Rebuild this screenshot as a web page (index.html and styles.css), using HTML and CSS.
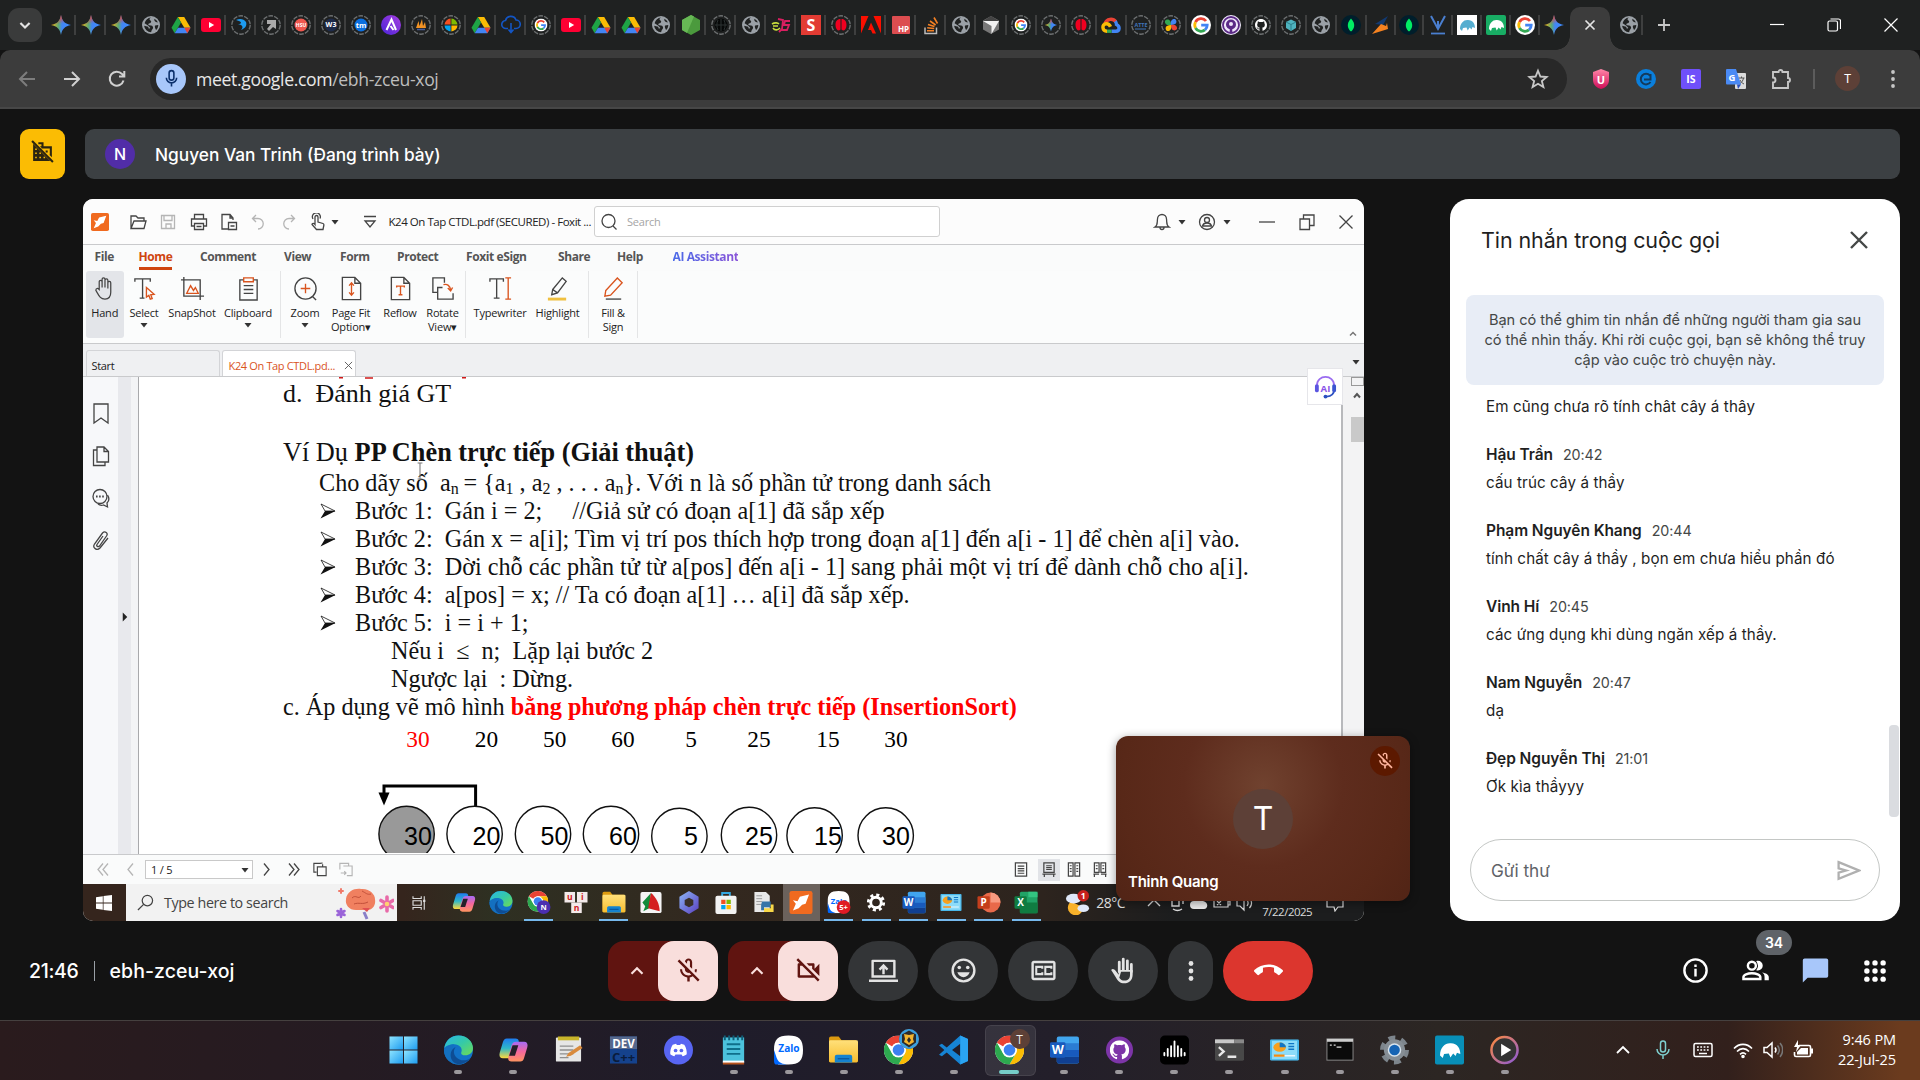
FILE: index.html
```html
<!DOCTYPE html>
<html lang="vi">
<head>
<meta charset="utf-8">
<title>Meet - ebh-zceu-xoj</title>
<link rel="stylesheet" href="styles.css">
</head>
<body>
<svg class="defs" aria-hidden="true">
<defs>
<linearGradient id="g-gem" x1="0" y1=".5" x2="1" y2=".5"><stop offset="0" stop-color="#fbbc04"/><stop offset=".38" stop-color="#5aa879"/><stop offset=".55" stop-color="#4285f4"/><stop offset="1" stop-color="#3c8cff"/></linearGradient>
<linearGradient id="g-gemr" x1=".4" y1="0" x2=".6" y2="1"><stop offset=".05" stop-color="#ea4335"/><stop offset=".45" stop-color="#ea4335" stop-opacity="0"/></linearGradient>
<linearGradient id="g-edge" x1="0" y1="0" x2="1" y2="1"><stop offset="0" stop-color="#2ab7e8"/><stop offset=".5" stop-color="#35c9a8"/><stop offset="1" stop-color="#6fdc52"/></linearGradient>
<linearGradient id="g-cop1" x1="0" y1="0" x2="0" y2="1"><stop offset="0" stop-color="#1e7bf0"/><stop offset=".5" stop-color="#2fb8c8"/><stop offset="1" stop-color="#ffd83b"/></linearGradient>
<linearGradient id="g-cop2" x1="0" y1="0" x2="0" y2="1"><stop offset="0" stop-color="#a56bf5"/><stop offset=".5" stop-color="#f4679c"/><stop offset="1" stop-color="#ff9460"/></linearGradient>
<linearGradient id="g-win" x1="0" y1="0" x2="1" y2="1"><stop offset="0" stop-color="#8ee4ff"/><stop offset="1" stop-color="#1e9cf0"/></linearGradient>
<linearGradient id="g-fold" x1="0" y1="0" x2="0" y2="1"><stop offset="0" stop-color="#ffe07a"/><stop offset="1" stop-color="#f7bd2e"/></linearGradient>
<linearGradient id="g-u" x1="0" y1="0" x2="0" y2="1"><stop offset="0" stop-color="#ff86a8"/><stop offset="1" stop-color="#cf0d58"/></linearGradient>
<linearGradient id="g-ast" x1="0" y1="1" x2="1" y2="0"><stop offset="0" stop-color="#4a24d8"/><stop offset="1" stop-color="#a63de0"/></linearGradient>
<linearGradient id="g-media" x1="0" y1="0" x2="1" y2="1"><stop offset="0" stop-color="#ff8a3c"/><stop offset="1" stop-color="#8b5ad8"/></linearGradient>
<linearGradient id="g-365" x1="0" y1="0" x2="1" y2="1"><stop offset="0" stop-color="#8cb6f5"/><stop offset="1" stop-color="#5a3fc0"/></linearGradient>

<symbol id="f-gem" viewBox="0 0 20 20"><path d="M10 0C11 6 14 9 20 10 14 11 11 14 10 20 9 14 6 11 0 10 6 9 9 6 10 0z" fill="url(#g-gem)"/><path d="M10 0C11 6 14 9 20 10 14 11 11 14 10 20 9 14 6 11 0 10 6 9 9 6 10 0z" fill="url(#g-gemr)"/></symbol>
<symbol id="f-globe" viewBox="0 0 20 20"><circle cx="10" cy="10" r="9" fill="#9aa0a6"/><path d="M10 2.600c-2 1-1.800 2.200-.6 2.800 1.600.7.500 2.600-.9 2.800-1.800.3-1.400 1.800 0 2 2 .2 3.800.6 3.600 2.600-.2 1.500-1.500 1.800-2 4.500a7.300 7.300 0 0 1-7-6.500l4 1 .8 2 1.500-.8-2-2.300-3.800-2.400C4.500 5.300 6.800 2.800 10 2.600z" fill="#202222"/><path d="M13.500 3.800c-.6 1.500.2 2.700 1.600 3.200.8.300 1.700.2 2 .8A7.500 7.500 0 0 0 13.500 3.800zM14 10.500l3.300-.6c0 2.200-1 4-2.300 5.200-.3-1.600-1.700-2.600-1-4.600z" fill="#202222"/></symbol>
<symbol id="f-drive" viewBox="0 0 20 20"><path d="M6.800 2h6.400L19.500 12.800h-6.200z" fill="#fbbc04"/><path d="M6.800 2L.5 12.800l3.200 5.400L10 7.400z" fill="#1ea446"/><path d="M7 12.800h12.500l-3.200 5.400H3.700z" fill="#4285f4"/><path d="M13.300 12.800h6.200l-3.200 5.400z" fill="#ea4335"/></symbol>
<symbol id="f-yt" viewBox="0 0 20 20"><rect x="0" y="3" width="20" height="14" rx="3" fill="#ff0033"/><path d="M8 7l5.200 3L8 13z" fill="#fff"/></symbol>
<symbol id="f-ring" viewBox="0 0 20 20"><circle cx="10" cy="10" r="9.200" fill="none" stroke="#6c6f70" stroke-width="1.400" stroke-dasharray="4.600 1.180"/></symbol>
<symbol id="f-g" viewBox="0 0 20 20"><circle cx="10" cy="10" r="10" fill="#fff"/><path d="M15 6A6.200 6.200 0 0 0 4.500 7.200" fill="none" stroke="#ea4335" stroke-width="2.800"/><path d="M4.500 7.200a6.200 6.200 0 0 0 0 5.800" fill="none" stroke="#fbbc04" stroke-width="2.800"/><path d="M4.500 13a6.200 6.200 0 0 0 9.500 1.900" fill="none" stroke="#34a853" stroke-width="2.800"/><path d="M10.200 10.200h6a6.200 6.200 0 0 1-2.200 4.700" fill="none" stroke="#4285f4" stroke-width="2.800"/></symbol>
<symbol id="f-cloud" viewBox="0 0 20 20"><g fill="none" stroke-width="3.400"><path d="M4 8.500A6.200 6.200 0 0 1 14.800 6.800" stroke="#ea4335"/><path d="M14.300 6.200c1 1.300 1.200 2 1.200 3.300 3.500 1.500 3.500 6.700-.5 6.700h-4.500" stroke="#4285f4"/><path d="M10.500 16.200H6" stroke="#34a853"/><path d="M6 16.200c-5 0-5.500-7-1-7.500 2-.2 3.500.8 4.500 3" stroke="#fbbc04"/></g></symbol>
<symbol id="f-mongo" viewBox="0 0 20 20"><circle cx="10" cy="10" r="10" fill="#001e2b"/><path d="M10 3.500c5 5 3.500 10.500 0 13-3.500-2.500-5-8 0-13z" fill="#00ed64"/></symbol>
<symbol id="f-mam" viewBox="0 0 20 20"><path d="M3 14C3 8 7 4.500 11 5c5 .2 7 4 7 8l-2.500-1-1 2.500-1.800-2-2 3-1.200-3-3.500.5-1 3z"/></symbol>
<symbol id="f-red" viewBox="0 0 20 20"><use href="#f-ring"/><path d="M9.500 4C6 4 4.500 6.500 4.500 10s1.500 5.500 3.500 5.500l1.500-1zM10.500 4c3.500 0 5 2.500 5 6s-1.500 5.500-3.500 5.500l-1.500-1z" fill="#f00020"/></symbol>

<symbol id="i-chrome" viewBox="0 0 30 30"><circle cx="15" cy="15" r="15" fill="#fff"/><path d="M2 7.500A15 15 0 0 1 28 7.500H15a7.500 7.500 0 0 0-6.500 3.800z" fill="#ea4335"/><path d="M28 7.500A15 15 0 0 1 15 30l6.500-11.200A7.500 7.500 0 0 0 21.500 11.300L18 7.500z" fill="#fbbc04"/><path d="M2 7.500A15 15 0 0 0 15 30l6.500-11.200a7.500 7.500 0 0 1-13 0z" fill="#2da94f"/><circle cx="15" cy="15" r="7.500" fill="#fff"/><circle cx="15" cy="15" r="6" fill="#3c80f0"/></symbol>
<symbol id="i-edge" viewBox="0 0 30 30"><circle cx="15" cy="15" r="15" fill="#1272c8"/><path d="M.3 13C2 4 8 0 15 0c9 0 15 6.500 15 13 0 5-4 7.500-8 7.500-3 0-5-1.500-4-3.500 1.500-4-2-8-7.500-8C5.500 9 1.500 11 .3 13z" fill="url(#g-edge)"/><path d="M10.500 9C6 15 9 27 22 25.500c2-.2 4-1.200 5-2C24 28 20 30 15 30 6.500 30 0 23.500 0 15c0-2 6-6 10.500-6z" fill="#1470c0"/><path d="M12 12c-4 5-1 12 6 13.500 4 .7 7.500-.5 9-2-3 4-8 6.500-13 6C6 28 4 16 12 12z" fill="#0e4d94"/></symbol>
<symbol id="i-cop" viewBox="0 0 30 30"><path d="M8 3h9c3 0 4 2 3.200 5l-3 11c-.8 3-2 4.500-5 4.500H4c-3.500 0-4-3-3.200-6L4 7c.7-2.600 2-4 4-4z" fill="url(#g-cop1)"/><path d="M22 27h-9c-3 0-4-2-3.200-5l3-11c.8-3 2-4.500 5-4.500H26c3.500 0 4 3 3.200 6L26 23c-.7 2.600-2 4-4 4z" fill="url(#g-cop2)"/><path d="M14 10h6l-3.500 11h-6z" fill="#241f2a"/></symbol>
<symbol id="i-word" viewBox="0 0 30 30"><rect x="7" y="1" width="23" height="28" rx="2" fill="#41a5ee"/><path d="M7 8h23v7H7z" fill="#2b7cd3"/><path d="M7 15h23v7H7z" fill="#185abd"/><path d="M7 22h23v5a2 2 0 0 1-2 2H9a2 2 0 0 1-2-2z" fill="#103f91"/><rect x="0" y="7" width="16" height="16" rx="1.500" fill="#185abd"/><text x="8" y="19.500" text-anchor="middle" class="svgt" font-size="13" fill="#fff">W</text></symbol>
<symbol id="i-fold" viewBox="0 0 30 30"><path d="M0 3a2 2 0 0 1 2-2h8l3 4h15v22H0z" fill="#dc9a10"/><rect x="0" y="5" width="30" height="23" rx="1.500" fill="url(#g-fold)"/><path d="M6 28v-6a2 2 0 0 1 2-2h14a2 2 0 0 1 2 2v6z" fill="#1583cf"/><path d="M9 24h12" stroke="#0b5aa0" stroke-width="1.500"/></symbol>
<symbol id="i-zalo" viewBox="0 0 30 30"><path d="M5 28C1 26 0 22 0 15 0 4 4 0 15 0s15 4 15 15-4 15-15 15H4z" fill="#fff"/><path d="M2 21c2 7 5 8 11 9H3c-2 0-3-1-3-4V15z" fill="#0068ff"/><text x="15.500" y="17.500" text-anchor="middle" class="svgt" font-size="10.500" fill="#0068ff">Zalo</text></symbol>
<symbol id="i-cpl" viewBox="0 0 30 30" preserveAspectRatio="none"><rect width="30" height="30" rx="1.500" fill="#48b7ea"/><rect x="2" y="2" width="26" height="26" fill="#8ddcf9"/><circle cx="10" cy="11" r="6.500" fill="#f8a01c"/><path d="M10 4.500a6.500 6.500 0 0 1 6.500 6.500H10z" fill="#0f76c6"/><path d="M19 6h6M19 10h6M19 14h6" stroke="#0f76c6" stroke-width="2"/><path d="M4 23h22" stroke="#e8f8ff" stroke-width="2"/><path d="M4 23h11" stroke="#f28c13" stroke-width="3"/></symbol>
<symbol id="i-gh" viewBox="0 0 16 16"><path d="M8 0C3.580 0 0 3.580 0 8c0 3.540 2.290 6.530 5.470 7.590.4.070.55-.17.550-.38 0-.19-.01-.82-.01-1.490-2.010.37-2.530-.49-2.690-.94-.09-.23-.48-.94-.82-1.130-.28-.15-.68-.52-.01-.53.63-.01 1.080.58 1.230.82.720 1.210 1.870.87 2.330.66.070-.52.280-.87.510-1.070-1.780-.2-3.640-.89-3.640-3.950 0-.87.310-1.590.82-2.150-.08-.2-.36-1.020.08-2.120 0 0 .67-.21 2.200.82.640-.18 1.320-.27 2-.27s1.360.09 2 .27c1.530-1.040 2.200-.82 2.200-.82.440 1.100.160 1.920.080 2.120.510.560.820 1.270.820 2.150 0 3.070-1.870 3.750-3.650 3.950.290.250.540.730.540 1.480 0 1.070-.01 1.930-.01 2.200 0 .21.150.46.550.38A8.010 8.010 0 0 0 16 8c0-4.420-3.580-8-8-8z"/></symbol>
<symbol id="i-micoff" viewBox="0 0 24 24"><path d="M10.800 4.900c0-.66.540-1.200 1.200-1.200s1.200.54 1.200 1.200l-.01 3.910L15 10.600V5c0-1.660-1.340-3-3-3-1.540 0-2.790 1.160-2.960 2.650l1.760 1.760V4.900zM19 11h-1.700c0 .58-.1 1.130-.27 1.640l1.270 1.270c.44-.88.700-1.870.700-2.910zM4.410 2.860L3 4.270l6 6V11c0 1.660 1.340 3 3 3 .23 0 .44-.03.650-.08l1.660 1.660c-.71.330-1.500.520-2.310.520-2.760 0-5.300-2.100-5.300-5.100H5c0 3.410 2.720 6.230 6 6.720V21h2v-3.280c.91-.13 1.770-.45 2.550-.9l4.200 4.200 1.410-1.410z"/></symbol>
<symbol id="i-mic" viewBox="0 0 24 24" fill="none" stroke="currentColor" stroke-width="2"><rect x="9" y="2" width="6" height="12" rx="3"/><path d="M5.500 11a6.500 6.500 0 0 0 13 0M12 17.500V22"/></symbol>
<symbol id="i-caret" viewBox="0 0 8 8"><path d="M.5 2h7L4 6.500z" fill="#333"/></symbol>
<symbol id="i-up" viewBox="0 0 24 24"><path d="M6 15l6-6 6 6" fill="none" stroke="currentColor" stroke-width="2.400"/></symbol>
<symbol id="i-foxit" viewBox="0 0 20 20"><rect width="20" height="20" rx="2" fill="#f06a1f"/><path d="M17 3L9 5 7 9 3 8l2.500 3L3 17l5-2 3-3 3-1z" fill="#fff"/></symbol>
<symbol id="i-bullet" viewBox="0 0 16 16"><path d="M1 1l14 7H5z" fill="none" stroke="#111" stroke-width=".8"/><path d="M5 8h10.500L.5 15.500z" fill="#111"/></symbol>
</defs>
</svg>

<header class="tabstrip">
  <div class="tabsearch"><svg viewBox="0 0 24 24"><path d="M6.500 9.500l5.500 5.500 5.500-5.500" fill="none" stroke="#e3e3e3" stroke-width="2.600"/></svg></div>
  <div class="tabs">
    <span class="tab"><svg><use href="#f-gem"/></svg></span><span class="tab"><svg><use href="#f-gem"/></svg></span><span class="tab"><svg><use href="#f-gem"/></svg></span>
    <span class="tab"><svg><use href="#f-globe"/></svg></span><span class="tab"><svg><use href="#f-drive"/></svg></span><span class="tab"><svg><use href="#f-yt"/></svg></span>
    <span class="tab"><svg viewBox="0 0 20 20"><use href="#f-ring"/><path d="M5 5c4-2 8-1 10 2 1 3 0 6-5 8 2-2 2-4 0-5l-3-1c2 0 3-.5 3-1.500C9 6 7 6 5 5z" fill="#1d9bf0"/></svg></span>
    <span class="tab"><svg viewBox="0 0 20 20"><use href="#f-ring"/><path d="M6 5h9v9l-3-2-4 4-2-2 4-5H6z" fill="#aaa"/></svg></span>
    <span class="tab"><svg viewBox="0 0 20 20"><use href="#f-ring"/><circle cx="10" cy="10" r="6.500" fill="#f0584f"/><text x="10" y="12" class="svgt" font-size="5" fill="#fff" text-anchor="middle">HSU</text></svg></span>
    <span class="tab"><svg viewBox="0 0 20 20"><use href="#f-ring"/><circle cx="10" cy="10" r="6.500" fill="#1e2b4a"/><text x="10" y="11.500" class="svgt" font-size="7" fill="#fff" text-anchor="middle">W3</text></svg></span>
    <span class="tab"><svg viewBox="0 0 20 20"><use href="#f-ring"/><circle cx="10" cy="10" r="6.500" fill="#0b6fe0"/><text x="10" y="12.500" class="svgt" font-size="7.500" fill="#fff" text-anchor="middle">tm</text></svg></span>
    <span class="tab"><svg viewBox="0 0 20 20"><circle cx="10" cy="10" r="10" fill="url(#g-ast)"/><path d="M5.500 15L10.500 4.500 15 15M9.500 11l3 4" fill="none" stroke="#fff" stroke-width="2"/></svg></span>
    <span class="tab"><svg viewBox="0 0 20 20"><use href="#f-ring"/><path d="M5 13l2.500-7 1 5 2.500-7 1 7 2-4 1 6z" fill="#f29324"/><path d="M6 14.500h8" stroke="#4a5f9a" stroke-width="1.500"/></svg></span>
    <span class="tab"><svg viewBox="0 0 20 20"><use href="#f-ring"/><path d="M9.600 3.500v6.100H3.500a6.500 6.500 0 0 1 6.100-6.100z" fill="#f25022"/><path d="M10.400 3.500v6.100h6.100a6.500 6.500 0 0 0-6.100-6.100z" fill="#7fba00"/><path d="M9.600 16.500v-6.100H3.500a6.500 6.500 0 0 0 6.100 6.100z" fill="#00a4ef"/><path d="M10.400 16.500v-6.100h6.100a6.500 6.500 0 0 1-6.100 6.100z" fill="#ffb900"/></svg></span>
    <span class="tab"><svg><use href="#f-drive"/></svg></span>
    <span class="tab"><svg viewBox="0 0 20 20"><path d="M7 13.500H5a4 4 0 0 1-.5-8 5.500 5.500 0 0 1 10.500-.5 4.200 4.200 0 0 1 0 8.500h-2M10 8v9M7.500 14.500L10 17.500l2.500-3" fill="none" stroke="#1355c4" stroke-width="1.600"/></svg></span>
    <span class="tab"><svg viewBox="0 0 20 20"><use href="#f-ring"/><use href="#f-g" x="3.500" y="3.500" width="13" height="13"/></svg></span>
    <span class="tab"><svg><use href="#f-yt"/></svg></span><span class="tab"><svg><use href="#f-drive"/></svg></span><span class="tab"><svg><use href="#f-drive"/></svg></span><span class="tab"><svg><use href="#f-globe"/></svg></span>
    <span class="tab"><svg viewBox="0 0 20 20"><path d="M10 0l9 5v10l-9 5-9-5V5z" fill="#4b9a3d"/><path d="M10 0l3 1.500L6 18l-5-3V5z" fill="#67b855"/></svg></span>
    <span class="tab"><svg viewBox="0 0 20 20"><use href="#f-ring"/><circle cx="10" cy="10" r="6.500" fill="#060808"/><path d="M4 10h12M10 4v12M7 5c-1.500 3-1.500 7 0 10M13 5c1.500 3 1.500 7 0 10" fill="none" stroke="#2c3232"/></svg></span>
    <span class="tab"><svg><use href="#f-globe"/></svg></span>
    <span class="tab"><svg viewBox="0 0 20 20"><path d="M1 9c3-2 6-1 7 0M2 13c2 3 5 2 7 0M2 11h5" stroke="#c8dc3c" fill="none" stroke-width="1.600"/><path d="M7 4l5 1-1 9-3 3M19 6h-5l-1 4h5l-2 5h-5" stroke="#d81f60" fill="none" stroke-width="1.800"/></svg></span>
    <span class="tab"><svg viewBox="0 0 20 20"><rect width="20" height="20" fill="#e23b33"/><text x="10" y="15.500" class="svgt" font-size="16" fill="#fff" text-anchor="middle">S</text></svg></span>
    <span class="tab"><svg><use href="#f-red"/></svg></span>
    <span class="tab"><svg viewBox="0 0 20 20"><path d="M0 1h7.500L0 18.500zM20 1h-7.500L20 18.500zM10 7.500l5 11h-3.500L10 15H7z" fill="#fa0f00"/></svg></span>
    <span class="tab"><svg viewBox="0 0 20 20"><rect x="1" y="1" width="18" height="18" rx="1" fill="#dc4d50"/><text x="12.500" y="17" class="svgt" font-size="8" fill="#fff" text-anchor="middle">HP</text></svg></span>
    <span class="tab"><svg viewBox="0 0 20 20"><path d="M4 12.500v6h11.500v-6" fill="none" stroke="#bcbbbb" stroke-width="1.500"/><path d="M6 15.700h7M6.200 12.700l7 .8M7 9.500l6.500 2M9 6l5.600 4M13 2.500l3.500 6" stroke="#f48024" stroke-width="1.600"/></svg></span>
    <span class="tab"><svg><use href="#f-globe"/></svg></span>
    <span class="tab"><svg viewBox="0 0 20 20"><path d="M10 1l8 4.500v9L10 19l-8-4.500v-9z" fill="#777"/><path d="M2 6h16l-7.500 13V11z" fill="#f2f2f2"/><path d="M10 1l8 5H2z" fill="#444"/></svg></span>
    <span class="tab"><svg viewBox="0 0 20 20"><use href="#f-ring"/><use href="#f-g" x="3.500" y="3.500" width="13" height="13"/></svg></span>
    <span class="tab"><svg viewBox="0 0 20 20"><use href="#f-ring"/><use href="#f-gem" x="3.500" y="3.500" width="13" height="13"/></svg></span>
    <span class="tab"><svg><use href="#f-red"/></svg></span><span class="tab"><svg><use href="#f-cloud"/></svg></span>
    <span class="tab"><svg viewBox="0 0 20 20"><use href="#f-ring"/><text x="10" y="11.500" class="svgt" font-size="5.500" fill="#3f74b8" text-anchor="middle">ATTE</text><path d="M4 14h11" stroke="#3f74b8"/></svg></span>
    <span class="tab"><svg viewBox="0 0 20 20"><use href="#f-ring"/><path d="M10 10C6 11 3.500 9 4 6c2-2.500 6-2 6 4z" fill="#34a853"/><path d="M10 10c-1-4 1-6.500 4-6 2.500 2 2 6-4 6z" fill="#4285f4"/><path d="M10 10c4-1 6.500 1 6 4-2 2.500-6 2-6-4z" fill="#ea4335"/><path d="M10 10c1 4-1 6.500-4 6-2.500-2-2-6 4-6z" fill="#fbbc04"/></svg></span>
    <span class="tab"><svg><use href="#f-g"/></svg></span>
    <span class="tab"><svg viewBox="0 0 20 20"><circle cx="10" cy="10" r="10" fill="#efe7fa"/><circle cx="10" cy="10" r="8" fill="none" stroke="#5b2a86" stroke-width="1.800"/><circle cx="10" cy="9.500" r="5" fill="#5b2a86"/><circle cx="10" cy="9" r="2" fill="#efe7fa"/><path d="M10 11v6" stroke="#5b2a86" stroke-width="2.500"/></svg></span>
    <span class="tab"><svg viewBox="0 0 20 20"><use href="#f-ring"/><use href="#i-gh" x="4" y="4" width="12" height="12" fill="#fff"/></svg></span>
    <span class="tab"><svg viewBox="0 0 20 20"><use href="#f-ring"/><path d="M10 4.500l5 2.500v6l-5 3-5-3V7z" fill="#4fb3bf"/><path d="M5 7l5 2.500L15 7M10 9.500V16" stroke="#2b7f8b" fill="none"/></svg></span>
    <span class="tab"><svg><use href="#f-globe"/></svg></span><span class="tab"><svg><use href="#f-mongo"/></svg></span>
    <span class="tab tight"><svg viewBox="0 0 20 20"><path d="M4 9L17 1l-5 9z" fill="#123a72"/><path d="M1 19l9-10 5 2 1-3 1 6z" fill="#f58220"/></svg></span>
    <span class="tab tight"><svg><use href="#f-mongo"/></svg></span>
    <span class="tab tight"><svg viewBox="0 0 20 20"><path d="M3 1l7 13 7-13M10 14V6" fill="none" stroke="#4a7fd0" stroke-width="2"/><path d="M3 18.500h14" stroke="#4a7fd0" stroke-width="1.800"/></svg></span>
    <span class="tab tight"><svg viewBox="0 0 20 20"><rect width="20" height="20" fill="#fff"/><use href="#f-mam" fill="#56aed0"/></svg></span>
    <span class="tab tight"><svg viewBox="0 0 20 20"><rect width="20" height="20" rx="2" fill="#18ad64"/><use href="#f-mam" fill="#fff"/></svg></span>
    <span class="tab tight"><svg><use href="#f-g"/></svg></span>
    <span class="tab tight last"><svg><use href="#f-gem"/></svg></span>
  </div>
  <div class="activetab"><svg viewBox="0 0 12 12"><path d="M1.500 1.500l9 9M10.500 1.500l-9 9" stroke="#e3e3e3" stroke-width="1.700"/></svg></div>
  <span class="tab aftertab"><svg><use href="#f-globe"/></svg></span>
  <svg class="plus" viewBox="0 0 14 14"><path d="M7 1v12M1 7h12" stroke="#c7c7c7" stroke-width="1.800"/></svg>
  <div class="winctl">
    <svg viewBox="0 0 14 14"><path d="M0 6.500h14" stroke="#fff" stroke-width="1.200"/></svg>
    <svg viewBox="0 0 14 14"><rect x="1" y="3" width="9.500" height="10" rx="1.500" fill="none" stroke="#fff" stroke-width="1.200"/><path d="M3.500 1h8a2 2 0 0 1 2 2v8" fill="none" stroke="#fff" stroke-width="1.200"/></svg>
    <svg viewBox="0 0 14 14"><path d="M.5.5l13 13M13.500.5l-13 13" stroke="#fff" stroke-width="1.200"/></svg>
  </div>
</header>

<div class="toolbar">
  <div class="navbtns">
    <svg viewBox="0 0 20 20" stroke="#7d7d7d"><path d="M18 10H3M10 3l-7 7 7 7"/></svg>
    <svg viewBox="0 0 20 20" stroke="#d0d0d0"><path d="M2 10h15M10 3l7 7-7 7"/></svg>
    <svg viewBox="0 0 20 20" stroke="#d0d0d0"><path d="M16.500 11.500A7 7 0 1 1 15 5l2 2.500M17.300 2v5.500H12"/></svg>
  </div>
  <div class="omnibox">
    <span class="micdot"><svg><use href="#i-mic"/></svg></span>
    <span class="url">meet.google.com<i>/ebh-zceu-xoj</i></span>
    <svg class="star" viewBox="0 0 24 24"><path d="M12 3l2.600 6.300 6.800.5-5.200 4.400 1.700 6.600L12 17.200l-5.900 3.600 1.700-6.600-5.200-4.400 6.800-.5z" fill="none" stroke="#c7c7c7" stroke-width="2"/></svg>
  </div>
  <div class="exts">
    <svg viewBox="0 0 20 20"><path d="M10 0l8 3v8c0 5-4 8-8 9-4-1-8-4-8-9V3z" fill="url(#g-u)"/><text x="10" y="14.500" class="svgt" font-size="11" fill="#fff" text-anchor="middle">U</text></svg>
    <svg viewBox="0 0 20 20"><circle cx="10" cy="10" r="10" fill="#0a7fdc"/><path d="M14.500 13A5.300 5.300 0 1 1 14 6.500M8 10.500h6.500V5" fill="none" stroke="#133a5c" stroke-width="2"/></svg>
    <svg viewBox="0 0 20 20"><rect width="20" height="20" rx="2" fill="#6f50fa"/><text x="10" y="13.800" class="svgt" font-size="10.500" fill="#fff" text-anchor="middle">IS</text></svg>
    <svg viewBox="0 0 20 20"><rect x="9" y="4" width="11" height="16" rx="1" fill="#dcdcdc"/><path d="M12.500 9h6M15.500 7.500V9M17.500 9c-.5 3-2 4.500-4 6M14 11c1 2 2 3 4 4" stroke="#555" fill="none"/><path d="M1 0h9l5 15.500H1a1 1 0 0 1-1-1V1a1 1 0 0 1 1-1z" fill="#4a8af4"/><path d="M11 15.500h4L12 20z" fill="#2850c0"/><text x="6" y="11.500" class="svgt" font-size="9.500" fill="#fff" text-anchor="middle">G</text></svg>
    <svg viewBox="0 0 20 20"><path d="M2 3h5.500a2 2 0 0 1 4 0H17v6a2 2 0 0 1 0 4v6H2v-5.500a2.500 2.500 0 0 0 0-5z" fill="none" stroke="#c7c7c7" stroke-width="1.900"/></svg>
  </div>
  <span class="tsep"></span>
  <span class="profile">T</span>
  <svg class="menu" viewBox="0 0 6 20" fill="#c7c7c7"><circle cx="3" cy="3" r="1.900"/><circle cx="3" cy="10" r="1.900"/><circle cx="3" cy="17" r="1.900"/></svg>
</div>

<main class="meet">
  <div class="topbar">
    <div class="yellow"><svg viewBox="0 0 24 24"><path d="M8 3h5v4h8v10.500L18.500 15H19V9h-8v-.5L9.500 7H11V5H8z" fill="#2b2410"/><path d="M3 4.500L19.500 21H3z" fill="#2b2410"/><path d="M5 9h1.500v1.500H5zM5 13h1.500v1.500H5zM9 13h1.500v1.500H9zM5 17h1.500v1.500H5zM9 17h1.500v1.500H9zM13 17h1.500v1.500H13z" fill="#fbbc04"/><path d="M2 2l20 20" stroke="#2b2410" stroke-width="2"/><path d="M15 11h2v2h-2z" fill="#2b2410"/></svg></div>
    <div class="presenter"><span class="avatar">N</span><span class="ptext">Nguyen Van Trinh (Đang trình bày)</span></div>
  </div>

  <div class="stage">
    <section class="share">
      <div class="fx-title">
        <svg><use href="#i-foxit"/></svg>
        <svg viewBox="0 0 18 18" class="ln"><path d="M2 15.500V3h5l2 2h6v3M2 15.500L5 8h12l-2 7.500z"/></svg>
        <svg viewBox="0 0 18 18" class="ln dim"><path d="M2.500 2.500h13v13h-13zM5 2.500v5h8v-5M7 15v-4h5v4"/></svg>
        <svg viewBox="0 0 18 18" class="ln"><path d="M4.500 6V1.500h9V6M4.500 13H1.500V6h15v7h-3M4.500 10.500h9v6h-9zM6.500 13.500h5"/></svg>
        <svg viewBox="0 0 18 18" class="ln"><path d="M8 16H2V1.500h8l3 3.500v2M10 1.500V5h3M8.500 9.500h8v7h-8zM10.500 13h4"/></svg>
        <svg viewBox="0 0 18 18" class="ln dim"><path d="M7 2L3.500 5.500 7 9M3.500 5.500H9a5 5 0 0 1 0 10.500"/></svg>
        <svg viewBox="0 0 18 18" class="ln dim"><path d="M11 2l3.500 3.500L11 9M14.500 5.500H9a5 5 0 0 0 0 10.500"/></svg>
        <svg viewBox="0 0 18 18" class="ln"><path d="M6 10V4a1.500 1.500 0 0 1 3 0v5l5 1.500c1 .3 1 1 .8 2L14 16.500H7.500L3 11.500c0-1.500 2-1.500 3 0zM4 6a4 4 0 1 1 7-.5"/></svg>
        <svg class="c8"><use href="#i-caret"/></svg>
        <svg viewBox="0 0 18 18" class="ln"><path d="M3 3.500h12M4 8h10l-5 6z"/></svg>
        <span class="fx-name">K24 On Tap CTDL.pdf (SECURED) - Foxit ...</span>
        <div class="fx-search"><svg viewBox="0 0 18 18" class="ln"><circle cx="8.500" cy="8" r="6.500"/><path d="M13 13l3.500 3.500"/></svg><span>Search</span></div>
        <svg viewBox="0 0 18 18" class="ln"><path d="M2 14h14c-3-2-2-5-2.500-8a4.500 4.500 0 0 0-9 0C4 9 5 12 2 14zM7 14.500a2 2 0 0 0 4 0"/></svg>
        <svg class="c8"><use href="#i-caret"/></svg>
        <svg viewBox="0 0 18 18" class="ln"><circle cx="9" cy="9" r="7.500"/><circle cx="9" cy="7" r="2.500"/><path d="M4.500 13c1-4 8-4 9 0z"/></svg>
        <svg class="c8"><use href="#i-caret"/></svg>
        <svg viewBox="0 0 18 18" class="ln"><path d="M1 9h16"/></svg>
        <svg viewBox="0 0 18 18" class="ln"><path d="M2 6h9.500v10.500H2zM5.500 6V2h10.500v10.500h-4.500"/></svg>
        <svg viewBox="0 0 18 18" class="ln"><path d="M2.500 2.500l13 13M15.500 2.500l-13 13"/></svg>
      </div>
      <nav class="fx-menu"><span>File</span><span class="on">Home</span><span>Comment</span><span>View</span><span>Form</span><span>Protect</span><span>Foxit eSign</span><span>Share</span><span>Help</span><span class="ai">AI Assistant</span></nav>
      <div class="fx-ribbon">
        <div class="tool sel"><svg viewBox="0 0 26 26" class="ln"><path d="M7.500 14V6a1.500 1.500 0 0 1 3 0v6V3.500a1.500 1.500 0 0 1 3 0V12 4.500a1.500 1.500 0 0 1 3 0V13 7a1.500 1.500 0 0 1 3 0v10c0 4-2 7-6 7-5 0-6-3-9.500-9 0-2.500 2-2.500 3.500-1z"/></svg><b>Hand</b></div>
        <div class="tool"><svg viewBox="0 0 26 26"><path d="M3 6V3h16v3M11 3v20M8 23h5" class="k"/><path d="M15 12l8 7-3.500.5 1.500 4-2 .5-1.500-4-2.500 2z" class="o"/></svg><b>Select</b><svg class="c8"><use href="#i-caret"/></svg></div>
        <div class="tool"><svg viewBox="0 0 26 26"><path d="M4 1v20h21M1 4h20v21" class="k"/><path d="M7 18l4-8 3 5 2-3 3 6z" class="o"/></svg><b>SnapShot</b></div>
        <div class="tool"><svg viewBox="0 0 26 26"><path d="M8 4H4v21h18V4h-4M8 10h10M8 14h10M8 18h10" class="k"/><path d="M8 2h10v4H8z" class="o"/></svg><b>Clipboard</b><svg class="c8"><use href="#i-caret"/></svg></div>
        <i></i>
        <div class="tool"><svg viewBox="0 0 26 26"><circle cx="13" cy="13" r="11" class="k"/><path d="M20 21l4 4" class="k"/><path d="M13 8v10M8 13h10" class="o"/></svg><b>Zoom</b><svg class="c8"><use href="#i-caret"/></svg></div>
        <div class="tool"><svg viewBox="0 0 26 26"><path d="M3.500 1.500h13l6 6v17h-19zM16.500 1.500v6h6" class="k"/><path d="M13 7v13M10.500 10L13 7l2.500 3M10.500 17l2.500 3 2.500-3" class="o"/></svg><b>Page Fit</b><b>Option▾</b></div>
        <div class="tool"><svg viewBox="0 0 26 26"><path d="M3.500 1.500h13l6 6v17h-19zM16.500 1.500v6h6" class="k"/><path d="M9 12v-1.500h8V12M13 10.500v9M11 19.500h4" class="o"/></svg><b>Reflow</b></div>
        <div class="tool"><svg viewBox="0 0 26 26"><path d="M8 17H3V2h12v5M13 12H8v12h16V18" class="k"/><path d="M14 9c4-1 7 1 7.500 6M18.500 12.500l3 3 2-3.500" class="o"/></svg><b>Rotate</b><b>View▾</b></div>
        <i></i>
        <div class="tool"><svg viewBox="0 0 26 26"><path d="M2 6V3h14v3M9 3v20M6 23h6" class="k"/><path d="M18 2h6M21 2v22M18 24h6" class="o"/></svg><b>Typewriter</b></div>
        <div class="tool"><svg viewBox="0 0 26 26"><path d="M8 14L18 2l4 3.500-9 12-6 2zM8 14l5 3.500" class="k"/><path d="M3 24h19" stroke="#f0c040" stroke-width="3"/></svg><b>Highlight</b></div>
        <i></i>
        <div class="tool"><svg viewBox="0 0 26 26"><path d="M5 15L17 2l5 5-12 13-6 1z" class="o"/><path d="M5 24h16" class="k"/></svg><b>Fill &amp;</b><b>Sign</b></div>
        <i></i>
        <svg class="collapse" viewBox="0 0 24 24"><path d="M6 15l6-6 6 6" fill="none" stroke="#777" stroke-width="3"/></svg>
      </div>
      <div class="fx-tabs"><span class="ft">Start</span><span class="ft cur">K24 On Tap CTDL.pd...<svg viewBox="0 0 10 10"><path d="M1 1l8 8M9 1L1 9" stroke="#555"/></svg></span><svg class="c8 end"><use href="#i-caret"/></svg></div>
      <div class="fx-body">
        <div class="rail">
          <svg viewBox="0 0 18 22" class="ln"><path d="M2 1h14v19l-7-5-7 5z"/></svg>
          <svg viewBox="0 0 18 22" class="ln"><path d="M5 2h7l4.500 4.500V17H5zM5 5H1.500v15.500H13V17M12 2v4.500h4.500"/></svg>
          <svg viewBox="0 0 18 22" class="ln"><circle cx="8" cy="8.500" r="7"/><path d="M15.500 7c2 3 1.500 6-.5 8l.5 4-4-2c-2 .6-4 .3-5.500-1"/><path d="M4 8.500h8" stroke-width="2" stroke-dasharray="1.600 1.500"/></svg>
          <svg viewBox="0 0 18 22" class="ln"><path d="M16 8l-8 10c-3 3-8 0-5.500-4l8-11c2.500-2.500 6 0 4 3l-7 10c-1.500 1.500-3.500 0-2.500-1.500L11 6"/></svg>
        </div>
        <div class="gutter"><svg viewBox="0 0 8 12"><path d="M1 0l6 6-6 6z" fill="#222"/></svg></div>
        <article class="page">
          <p class="l-d">d.&nbsp; Đánh giá GT</p>
          <p class="l-v">Ví Dụ <strong>PP Chèn trực tiếp (Giải thuật)</strong></p>
          <p class="in1">Cho dãy số&nbsp; a<sub>n</sub>&thinsp;= {a<sub>1</sub> , a<sub>2</sub> , . . . a<sub>n</sub>}. Với n là số phần tử trong danh sách</p>
          <p class="bl"><svg><use href="#i-bullet"/></svg>Bước 1:&nbsp; Gán i = 2;&nbsp; &nbsp; &nbsp;//Giả sử có đoạn a[1] đã sắp xếp</p>
          <p class="bl"><svg><use href="#i-bullet"/></svg>Bước 2:&nbsp; Gán x = a[i]; Tìm vị trí pos thích hợp trong đoạn a[1] đến a[i - 1] để chèn a[i] vào.</p>
          <p class="bl"><svg><use href="#i-bullet"/></svg>Bước 3:&nbsp; Dời chỗ các phần tử từ a[pos] đến a[i - 1] sang phải một vị trí để dành chỗ cho a[i].</p>
          <p class="bl"><svg><use href="#i-bullet"/></svg>Bước 4:&nbsp; a[pos] = x; // Ta có đoạn a[1] … a[i] đã sắp xếp.</p>
          <p class="bl"><svg><use href="#i-bullet"/></svg>Bước 5:&nbsp; i = i + 1;</p>
          <p class="in2">Nếu i &nbsp;≤&nbsp; n;&nbsp; Lặp lại bước 2</p>
          <p class="in2">Ngược lại&nbsp; : Dừng.</p>
          <p class="l-c">c. Áp dụng vẽ mô hình <strong class="red">bằng phương pháp chèn trực tiếp (InsertionSort)</strong></p>
          <svg class="array" viewBox="361 726 582 128">
            <g class="nums" text-anchor="middle"><text x="418" y="748" fill="#f00">30</text><text x="486.500" y="748">20</text><text x="554.700" y="748">50</text><text x="623" y="748">60</text><text x="691" y="748">5</text><text x="759" y="748">25</text><text x="828" y="748">15</text><text x="896" y="748">30</text></g>
            <path d="M384 795v-8h91.600v21" fill="none" stroke="#000" stroke-width="3"/><path d="M378.500 793.500h11L384 806.500z"/>
            <g fill="none" stroke="#111" stroke-width="1.400"><circle cx="406.600" cy="835" r="27.700" fill="#999"/><circle cx="474.600" cy="835" r="27.700"/><circle cx="543" cy="835" r="27.700"/><circle cx="611" cy="835" r="27.700"/><circle cx="679.400" cy="837" r="27.700"/><circle cx="749" cy="836" r="27.700"/><circle cx="814.600" cy="836.500" r="27.700"/><circle cx="885.700" cy="836.500" r="27.700"/></g>
            <g class="circ" text-anchor="middle"><text x="418" y="846">30</text><text x="486.500" y="846">20</text><text x="554.500" y="846">50</text><text x="623" y="846">60</text><text x="691" y="846">5</text><text x="759" y="846">25</text><text x="828" y="846">15</text><text x="896" y="846">30</text></g>
          </svg>
          <svg class="cursor" viewBox="0 0 10 22"><path d="M2 1h6M2 21h6M5 1v20" stroke="#777" stroke-width="1.300"/></svg>
          <svg class="cutline" viewBox="0 0 140 2"><path d="M1 .7h4M27 1h8M124 .7h4" stroke="#d01818" stroke-width="1.600"/><path d="M161 .5h2" stroke="#444"/></svg>
        </article>
        <div class="vscroll"><span class="split"></span><svg viewBox="0 0 24 24"><path d="M6 15l6-7 6 7" fill="none" stroke="#555" stroke-width="4"/></svg><span class="thumb"></span></div>
        <div class="aibox"><svg viewBox="0 0 24 26"><path d="M3 12C3 0 21 0 21 12" fill="none" stroke="#9a6cf0" stroke-width="1.800"/><path d="M21 16c0 4-3 7-8 7.500" fill="none" stroke="#2b4fc0" stroke-width="1.800"/><rect x="1" y="11" width="4" height="8" rx="1.500" fill="#5a55e0"/><rect x="19" y="11" width="4" height="8" rx="1.500" fill="#3b55d0"/><circle cx="12" cy="23.500" r="2" fill="#2b4fc0"/><text x="12" y="19" text-anchor="middle" class="svgt" font-size="10" fill="#8b55e8">AI</text></svg></div>
      </div>
      <div class="fx-status">
        <svg viewBox="0 0 14 14" class="ln dim"><path d="M7 1L2 7l5 6M12 1L7 7l5 6"/></svg>
        <svg viewBox="0 0 14 14" class="ln dim"><path d="M10 1L5 7l5 6"/></svg>
        <div class="pageno"><span>1 / 5</span><svg class="c8"><use href="#i-caret"/></svg></div>
        <svg viewBox="0 0 14 14" class="ln"><path d="M4 1l5 6-5 6"/></svg>
        <svg viewBox="0 0 14 14" class="ln"><path d="M2 1l5 6-5 6M7 1l5 6-5 6"/></svg>
        <svg viewBox="0 0 16 16" class="ln"><path d="M4 11H1V1h7M5 5h10v10H5zM8 1l3-.5M11 2v3"/></svg>
        <svg viewBox="0 0 16 16" class="ln dim"><path d="M1 8V1h10v3M5 4h10v11H9M2 12h6M6 10l2 2-2 2"/></svg>
        <svg viewBox="0 0 14 16" class="ln"><path d="M1 1h12v14H1zM3.500 4.500h7M3.500 7h7M3.500 9.500h7M3.500 12h7"/></svg>
        <span class="hl"><svg viewBox="0 0 14 16" class="ln"><path d="M1.500 1h11v10h-11zM4 4h6M4 6h6M4 8h6M0 13h14M2 13v3M12 13v3"/></svg></span>
        <svg viewBox="0 0 14 16" class="ln"><path d="M1 1h5v14H1zM8 1h5v14H8zM2.500 4h2M2.500 7h2M2.500 10h2M9.500 4h2M9.500 7h2M9.500 10h2"/></svg>
        <svg viewBox="0 0 14 16" class="ln"><path d="M1 1h5v10H1zM8 1h5v10H8zM2.500 4h2M2.500 7h2M9.500 4h2M9.500 7h2M0 13h6M8 13h6M1 13v3M13 13v3"/></svg>
      </div>
      <div class="w10">
        <div class="start"><svg viewBox="0 0 16 16" fill="#fff"><path d="M0 2.200l6.800-1v6.400H0zM7.500 1.100L16 0v7.600H7.500zM0 8.400h6.800v6.400l-6.800-1zM7.500 8.400H16V16l-8.500-1.100z"/></svg></div>
        <div class="wsearch"><svg viewBox="0 0 18 18" class="ln"><circle cx="11" cy="7" r="5.500"/><path d="M7 11l-6 6"/></svg><span>Type here to search</span>
          <svg class="brain" viewBox="0 0 60 34"><path d="M12 13c1-8 9-11 15-10 8-1 14 5 14 10 1 6-2 11-8 11H22c-7 0-11-5-10-11z" fill="#f08060"/><path d="M18 12c4-4 6 2 9-2M28 5c4 2 5 4 9 3M20 18c5-2 8 1 14-2" stroke="#c2503a" fill="none"/><path d="M28 22h8l-3 4z" fill="#e05050"/><path d="M30 26l3 7" stroke="#8a80c8" stroke-width="3"/><g fill="none" stroke-linecap="round"><path d="M53 11v14M47 14.500l12 7M59 14.500l-12 7" stroke="#e86aa8" stroke-width="3.600"/><path d="M7 23v8M3.500 25l7 4M10.500 25l-7 4" stroke="#9a63d8" stroke-width="2.600"/><path d="M7 3v4M5 5h4" stroke="#f07a6a" stroke-width="2"/></g><circle cx="53" cy="18" r="2.300" fill="#ffd070"/></svg></div>
        <div class="tv"><svg viewBox="0 0 24 24" fill="none" stroke="#ddd" stroke-width="1.500"><path d="M4 3v3h11V3M4 9h11v6H4zM4 21v-3h11v3M19 3v18"/><path d="M17.500 9h3" stroke-width="3"/></svg></div>
        <div class="wicons">
          <span><svg><use href="#i-cop"/></svg></span>
          <span><svg><use href="#i-edge"/></svg></span>
          <span class="run"><svg viewBox="0 0 30 30"><use href="#i-chrome" x="0" y="0" width="27" height="27"/><circle cx="21" cy="21" r="9" fill="#4b2fb0"/><text x="21" y="25" text-anchor="middle" class="svgt" font-size="10" fill="#fff">N</text></svg></span>
          <span><svg viewBox="0 0 24 24"><rect x="0" y="1" width="11" height="11" fill="#f3eaea"/><rect x="13" y="1" width="11" height="11" fill="#f3eaea"/><rect x="7" y="12" width="11" height="11" fill="#f3eaea"/><g class="svgt" font-size="9" fill="#d02020" text-anchor="middle"><text x="5.500" y="9.500">u</text><text x="18.500" y="9.500">i</text><text x="12.500" y="20.500">n</text></g></svg></span>
          <span class="run"><svg><use href="#i-fold"/></svg></span>
          <span><svg viewBox="0 0 24 24"><rect x="1" y="1" width="22" height="22" rx="2" fill="#f4f4f4"/><path d="M11 2l3 10-9 9-3-4z" fill="#f4f4f4"/><path d="M12 2L3 12l3 4-2 5 6-3z" fill="#128c3a"/><path d="M12 2L9 18l12 3c0-8-4-15-9-19z" fill="#d42020"/></svg></span>
          <span><svg viewBox="0 0 24 24"><path d="M12 0l10 6v12l-10 6-10-6V6z" fill="url(#g-365)"/><path d="M12 7l4.500 2.500v5L12 17l-4.500-2.500v-5z" fill="#3a3028"/></svg></span>
          <span><svg viewBox="0 0 24 24"><path d="M8 6V2h8v4" fill="none" stroke="#35a8e0" stroke-width="2"/><rect x="1" y="5" width="22" height="19" rx="2" fill="#f2f2f2"/><path d="M7 9h4.500v4.500H7z" fill="#f25022"/><path d="M12.500 9H17v4.500h-4.500z" fill="#7fba00"/><path d="M7 14.500h4.500V19H7z" fill="#00a4ef"/><path d="M12.500 14.500H17V19h-4.500z" fill="#ffb900"/></svg></span>
          <span><svg viewBox="0 0 24 24"><path d="M2 1h12l4 4v17H2z" fill="#e8e8e8"/><path d="M4 5h6M4 8h6M4 11h6M4 14h5" stroke="#999"/><path d="M10 11h9v6h-7v3H9v-6z" fill="#3674a8"/><path d="M22 14v8H12v-4h7v-4z" fill="#f8d848"/></svg></span>
          <span class="fxon"><svg><use href="#i-foxit"/></svg></span>
          <span class="run"><svg viewBox="0 0 30 30"><use href="#i-zalo" width="29" height="29"/><circle cx="21" cy="21" r="9" fill="#e01b24"/><text x="21" y="25" text-anchor="middle" class="svgt" font-size="10" fill="#fff">5+</text></svg></span>
          <span class="run"><svg viewBox="0 0 24 24" fill="none" stroke="#fff"><circle cx="12" cy="12" r="5.500" stroke-width="3"/><circle cx="12" cy="12" r="8" stroke-width="3" stroke-dasharray="3.200 3.083"/></svg></span>
          <span class="run"><svg><use href="#i-word"/></svg></span>
          <span class="run"><svg viewBox="0 0 30 30"><use href="#i-cpl" x="1" y="4" width="28" height="22"/></svg></span>
          <span class="run"><svg viewBox="0 0 30 30"><circle cx="17" cy="15" r="13" fill="#e8694a"/><path d="M17 2a13 13 0 0 1 13 13H17z" fill="#f79a80"/><rect x="0" y="7" width="16" height="16" rx="1.500" fill="#c43e1c"/><text x="8" y="19.500" text-anchor="middle" class="svgt" font-size="13" fill="#fff">P</text></svg></span>
          <span class="run"><svg viewBox="0 0 30 30"><rect x="7" y="1" width="23" height="28" rx="2" fill="#21a366"/><path d="M7 15h23v14H7z" fill="#107c41"/><path d="M18 1h12v7H18z" fill="#33c481"/><rect x="0" y="7" width="16" height="16" rx="1.500" fill="#107c41"/><text x="8" y="19.500" text-anchor="middle" class="svgt" font-size="13" fill="#fff">X</text></svg></span>
        </div>
        <div class="wtray">
          <svg class="wx" viewBox="0 0 26 26"><path d="M6 12a8 8 0 1 0 13 6z" fill="#f8b12a"/><ellipse cx="9" cy="9" rx="8" ry="5" fill="#dfe8fa"/><ellipse cx="19" cy="19" rx="6" ry="4" fill="#dfe8fa"/><circle cx="19" cy="6" r="6" fill="#c8201c"/><text x="19" y="9.500" class="svgt" font-size="9" fill="#fff" text-anchor="middle">1</text></svg>
          <span class="temp">28°C</span>
          <svg viewBox="0 0 18 18"><path d="M3 12l6-6 6 6" fill="none" stroke="#ddd" stroke-width="1.400"/></svg>
          <svg viewBox="0 0 18 18"><path d="M4 2h7v10H4zM11 5l4-2v7M5 15c3 2 6 2 9 0" fill="none" stroke="#ddd" stroke-width="1.400"/></svg>
          <svg viewBox="0 0 18 18"><path d="M4 15a4 4 0 0 1 0-8c2-5 8-4 9 0 6 1 5 8 1 8z" fill="#eee"/></svg>
          <svg viewBox="0 0 18 18"><path d="M1 5h14v8H1zM15 7h2v4h-2M4 7l4 4M8 7l-4 4" fill="none" stroke="#ddd" stroke-width="1.200"/></svg>
          <svg viewBox="0 0 18 18"><path d="M1 6h3l4-4v14l-4-4H1zM11 6c1.500 2 1.500 4 0 6M13.500 4c2.500 3 2.500 7 0 10" fill="none" stroke="#ddd" stroke-width="1.200"/></svg>
          <span class="wdate">7/22/2025</span>
          <svg viewBox="0 0 18 18"><path d="M1 2h16v11h-5l-3 4-1-4H1z" fill="none" stroke="#ddd" stroke-width="1.200"/></svg>
        </div>
      </div>
      <div class="pip">
        <span class="pipmic"><svg><use href="#i-micoff"/></svg></span>
        <span class="pipav">T</span>
        <span class="pipname">Thinh Quang</span>
      </div>
    </section>

    <aside class="chat">
      <div class="chead"><h2>Tin nhắn trong cuộc gọi</h2><svg viewBox="0 0 18 18"><path d="M1 1l16 16M17 1L1 17" stroke="#444746" stroke-width="2.400"/></svg></div>
      <div class="notice"><span>Bạn có thể ghim tin nhắn để những người tham gia sau</span><span>có thể nhìn thấy. Khi rời cuộc gọi, bạn sẽ không thể truy</span><span>cập vào cuộc trò chuyện này.</span></div>
      <div class="msgs">
        <p class="first">Em cũng chưa rõ tính chât cây á thây</p>
        <div class="msg"><h3>Hậu Trần<time>20:42</time></h3><p>cấu trúc cây á thầy</p></div>
        <div class="msg"><h3>Phạm Nguyên Khang<time>20:44</time></h3><p>tính chất cây á thầy , bọn em chưa hiểu phần đó</p></div>
        <div class="msg"><h3>Vinh Hí<time>20:45</time></h3><p>các ứng dụng khi dùng ngăn xếp á thầy.</p></div>
        <div class="msg"><h3>Nam Nguyễn<time>20:47</time></h3><p>dạ</p></div>
        <div class="msg"><h3>Đẹp Nguyễn Thị<time>21:01</time></h3><p>Ơk kìa thầyyy</p></div>
        <span class="cthumb"></span>
      </div>
      <div class="cinput"><span>Gửi thư</span><svg viewBox="0 0 24 24"><path d="M2.500 4L22 12 2.500 20v-6l7-2-7-2z" fill="none" stroke="#b0b0b0" stroke-width="2.200"/></svg></div>
    </aside>
  </div>

  <footer class="callbar">
    <div class="cinfo"><span>21:46</span><i></i><span>ebh-zceu-xoj</span></div>
    <div class="controls">
      <div class="pair"><svg class="up"><use href="#i-up"/></svg><span><svg><use href="#i-micoff"/></svg></span></div>
      <div class="pair"><svg class="up"><use href="#i-up"/></svg><span><svg viewBox="0 0 24 24"><path d="M9.560 8l-2-2-4.150-4.140L2 3.270 4.730 6H4c-.55 0-1 .45-1 1v10c0 .55.450 1 1 1h12c.21 0 .39-.08.55-.18L19.730 21l1.410-1.410-8.860-8.860zM5 16V8h1.730l8 8zm10-8v2.610l6 6V6.500l-4 4V7c0-.55-.45-1-1-1h-5.610l2 2z"/></svg></span></div>
      <div class="rbtn"><svg viewBox="0 0 24 24"><path d="M3 3h18a1 1 0 0 1 1 1v14H2V4a1 1 0 0 1 1-1zm1 2v11h16V5zM0 19.500h24v2H0z" fill-rule="evenodd"/><path d="M12 6.500l4 4-1.400 1.400L13 10.300V15h-2v-4.700l-1.600 1.600L8 10.500z"/></svg></div>
      <div class="rbtn"><svg viewBox="0 0 24 24"><path d="M12 2a10 10 0 1 0 0 20 10 10 0 0 0 0-20zm0 18a8 8 0 1 1 0-16 8 8 0 0 1 0 16z"/><circle cx="8.500" cy="9.500" r="1.500"/><circle cx="15.500" cy="9.500" r="1.500"/><path d="M6.900 13.500h10.200c-.8 2.400-2.800 4-5.100 4s-4.300-1.600-5.100-4z"/></svg></div>
      <div class="rbtn"><svg viewBox="0 0 24 24"><path d="M4 4h16c1.100 0 2 .9 2 2v12c0 1.100-.9 2-2 2H4c-1.100 0-2-.9-2-2V6c0-1.100.9-2 2-2zm0 2v12h16V6z" fill-rule="evenodd"/><path d="M11 10.500V9H6v6h5v-1.500M18.500 10.500V9h-5v6h5v-1.500" fill="none" stroke="#e3e3e3" stroke-width="1.700"/></svg></div>
      <div class="rbtn"><svg viewBox="0 0 24 24"><path d="M8.500 13V5M11.800 12V2.500M15.200 12V4M18.500 13V7" fill="none" stroke="#e3e3e3" stroke-width="2.300" stroke-linecap="round"/><path d="M8 11.500h11.600V15c0 5-3 7.500-7 7.500-3.500 0-5-1.500-7-5L1.800 11.500c1.200-1.400 2.700-.5 3.500.6L8 15.500z"/><path d="M10 13h7.400v2.500c0 3.200-1.600 4.800-4.600 4.800-2 0-3.200-.8-4.300-2.400z" fill="#333537"/></svg></div>
      <div class="rbtn slim"><svg viewBox="0 0 24 24"><circle cx="12" cy="4.500" r="2.400"/><circle cx="12" cy="12" r="2.400"/><circle cx="12" cy="19.500" r="2.400"/></svg></div>
      <div class="rbtn end"><svg viewBox="0 0 24 24"><path d="M12 9c-1.600 0-3.150.25-4.600.72v3.100c0 .39-.23.740-.56.900-.98.490-1.870 1.120-2.660 1.850-.18.180-.43.280-.7.280-.28 0-.53-.11-.71-.29L.290 13.080c-.18-.17-.29-.42-.29-.7 0-.28.110-.53.290-.71C3.340 8.780 7.460 7 12 7s8.660 1.780 11.710 4.670c.18.180.290.430.290.710 0 .28-.11.530-.29.710l-2.480 2.480c-.18.180-.43.290-.71.290-.27 0-.52-.11-.7-.28-.79-.74-1.690-1.360-2.670-1.850-.33-.16-.56-.5-.56-.9v-3.100C15.150 9.250 13.600 9 12 9z"/></svg></div>
    </div>
    <div class="ricons">
      <svg viewBox="0 0 24 24"><circle cx="12" cy="12" r="9.200" fill="none" stroke="#fff" stroke-width="2"/><path d="M11 10.500h2V17h-2zM11 7h2v2h-2z"/></svg>
      <div class="people"><svg viewBox="0 0 24 24"><circle cx="9" cy="8" r="3.300" fill="none" stroke="#fff" stroke-width="2"/><path d="M14 12a4 4 0 0 0 0-8c-.5 0-1 .1-1.400.3a6 6 0 0 1 0 7.400c.4.200.9.300 1.400.3zM17.500 13.700c1.600 1 2 2.300 2 3.800V20H23v-2.500c0-2-2.500-3.300-5.500-3.800z"/><path d="M2 19v-1.500c0-2 3.500-3.200 7-3.200s7 1.200 7 3.200V19z" fill="none" stroke="#fff" stroke-width="2"/></svg><b>34</b></div>
      <svg viewBox="0 0 24 24"><path d="M3 2h18a1.500 1.500 0 0 1 1.500 1.500v13A1.500 1.500 0 0 1 21 18H5.500L1.500 22V3.500A1.500 1.500 0 0 1 3 2z" fill="#a8c7fa"/></svg>
      <svg viewBox="0 0 24 24"><g id="dotrow"><circle cx="4.500" cy="4.500" r="2.500"/><circle cx="12" cy="4.500" r="2.500"/><circle cx="19.500" cy="4.500" r="2.500"/></g><use href="#dotrow" y="7.500"/><use href="#dotrow" y="15"/></svg>
    </div>
  </footer>
</main>

<div class="taskbar">
  <div class="apps">
    <span><svg viewBox="0 0 30 30" fill="url(#g-win)"><rect x=".5" y="1" width="14" height="13.500"/><rect x="15.500" y="1" width="14" height="13.500"/><rect x=".5" y="15.500" width="14" height="13.500"/><rect x="15.500" y="15.500" width="14" height="13.500"/></svg></span>
    <span class="run"><svg><use href="#i-edge"/></svg></span>
    <span class="run"><svg><use href="#i-cop"/></svg></span>
    <span><svg viewBox="0 0 30 30"><rect x="2" y="2" width="26" height="25" rx="1" fill="#e6e6e6"/><path d="M4 1h22v4H4z" fill="#c8b42a"/><path d="M6 11h14M6 15h14M6 19h14M6 23h9" stroke="#8f8f8f" stroke-width="1.300"/><path d="M27 10l2.500 3-12 8-5 1 2.500-4z" fill="#d98a3c"/></svg></span>
    <span><svg viewBox="0 0 30 30"><rect x="1" y="1" width="28" height="28" fill="#15428c"/><rect x="1" y="1" width="28" height="13" fill="#56688c"/><g class="svgt" text-anchor="middle"><text x="15" y="13" font-size="12" fill="#fff">DEV</text><text x="15" y="27" font-size="13.500" fill="#0a1c3c">C++</text></g></svg></span>
    <span><svg viewBox="0 0 30 30"><circle cx="15" cy="15" r="15" fill="#5865f2"/><path d="M9 9.500l3.500-1 .8 1.200h3.400l.8-1.200 3.500 1c2 3 2.800 6.500 2.500 10-1.500 1.200-2.800 1.700-4.300 2l-1-1.800h-6.400l-1 1.800c-1.500-.3-2.800-.8-4.300-2-.3-3.500.5-7 2.500-10z" fill="#fff"/><circle cx="12" cy="15.500" r="1.900" fill="#5865f2"/><circle cx="18" cy="15.500" r="1.900" fill="#5865f2"/></svg></span>
    <span class="run"><svg viewBox="0 0 30 30"><rect x="4" y="2" width="22" height="26" fill="#4cc2dc"/><rect x="4" y="26" width="22" height="2.500" fill="#fff"/><rect x="4" y="28" width="22" height="2" fill="#b8541e"/><path d="M6 0v5M10.500 0v5M15 0v5M19.500 0v5M24 0v5" stroke="#0f5f78" stroke-width="2"/><path d="M8 9h14M8 14h14M8 19h14" stroke="#0f6f8a" stroke-width="2"/></svg></span>
    <span class="run"><svg><use href="#i-zalo"/></svg></span>
    <span class="run"><svg><use href="#i-fold"/></svg></span>
    <span class="run"><svg viewBox="0 0 30 30"><use href="#i-chrome" width="30" height="30"/></svg><em class="bdg bee"><svg viewBox="0 0 20 20"><circle cx="10" cy="10" r="10" fill="#3aa0e0"/><path d="M10 1.500l7 4v8l-7 5-7-5v-8z" fill="#2b2b2b"/><path d="M10 6l5-1-1 5 1 3-5 3-5-3 1-3-1-5z" fill="#f2b530"/><path d="M10 8l2 3-2 3-2-3z" fill="#2b2b2b"/></svg></em></span>
    <span class="run"><svg viewBox="0 0 30 30"><path d="M22 0l8 3.500v23L22 30 8 17.500 3 21.500 0 20l5.500-5L0 10l3-1.500L8 12.500z" fill="#1684d4"/><path d="M22 8.500L13.500 15l8.500 6.500z" fill="#211d28"/><path d="M22 0l8 3.500v23L22 30z" fill="#2aa4f2"/></svg></span>
    <span class="run cur"><svg viewBox="0 0 30 30"><use href="#i-chrome" width="30" height="30"/></svg><em class="bdg">T</em></span>
    <span class="run"><svg><use href="#i-word"/></svg></span>
    <span class="run"><svg viewBox="0 0 30 30"><circle cx="15" cy="15" r="14" fill="#7d35a8"/><use href="#i-gh" x="5" y="5" width="20" height="20" fill="#fff"/></svg></span>
    <span class="run"><svg viewBox="0 0 30 30"><rect width="30" height="30" rx="5" fill="#000"/><path d="M4.500 18v2.500M8 14v7M11.500 11v10.500M15 6v15.500M18.500 11v10.500M22 14v7M25.500 18v2.500" stroke="#fff" stroke-width="1.900" stroke-linecap="round"/></svg></span>
    <span class="run"><svg viewBox="0 0 30 30"><rect y="4" width="30" height="22" rx="1.500" fill="#484848"/><path d="M0 4h20v4H0z" fill="#c8c8c8"/><path d="M20 4h10v4H20z" fill="#888"/><path d="M4 12l5 4.500-5 4.500M13 22h9" stroke="#e8e8e8" fill="none" stroke-width="2.400"/></svg></span>
    <span class="run"><svg viewBox="0 0 30 30"><use href="#i-cpl" x="0" y="4" width="30" height="22"/></svg></span>
    <span class="run"><svg viewBox="0 0 30 30"><rect x="2" y="3.500" width="27" height="22" fill="#0a0a0a" stroke="#8a8a8a"/><path d="M2 5h27" stroke="#ccc" stroke-width="3"/><path d="M5 10h2M9 10h2M12 12h5" stroke="#ddd" stroke-width="1.200"/></svg></span>
    <span class="run"><svg viewBox="0 0 30 30"><circle cx="15" cy="15" r="12.500" fill="none" stroke="#7d858c" stroke-width="5" stroke-dasharray="7 6.090"/><circle cx="15" cy="15" r="11" fill="#868e95"/><circle cx="15" cy="15" r="7" fill="#d8e4ee"/><circle cx="15" cy="15" r="5.500" fill="#1664b4"/></svg></span>
    <span class="run"><svg viewBox="0 0 30 30"><rect width="30" height="30" rx="2" fill="#088fb8"/><use href="#f-mam" x="1" y="1" width="28" height="28" fill="#fff"/></svg></span>
    <span class="run"><svg viewBox="0 0 30 30"><circle cx="15" cy="15" r="13.500" fill="#333" stroke="url(#g-media)" stroke-width="2.600"/><path d="M11.500 8.500L22 15l-10.500 6.500z" fill="#fff"/></svg></span>
  </div>
  <div class="tray">
    <svg viewBox="0 0 20 20"><path d="M4 13l6-6 6 6" fill="none" stroke="#fff" stroke-width="1.800"/></svg>
    <svg viewBox="0 0 20 20" fill="none" stroke="#7fd0d0" stroke-width="1.500"><rect x="7.500" y="1" width="5" height="11" rx="2.500"/><path d="M4 9a6 6 0 0 0 12 0M10 15v4"/></svg>
    <svg viewBox="0 0 20 20" fill="none" stroke="#fff" stroke-width="1.500"><rect x="1" y="3.500" width="18" height="13" rx="1.500"/><path d="M4 7h12M4 10h12" stroke-dasharray="1.800 1.500"/><path d="M6 13.500h8"/></svg>
    <svg viewBox="0 0 20 20" fill="none" stroke="#fff" stroke-width="1.600"><path d="M1 8.500c5-5.500 13-5.500 18 0M4 11.500c3.500-3.800 8.500-3.800 12 0M7 14.300c2-1.900 4-1.900 6 0"/><circle cx="10" cy="16.500" r="1" fill="#fff"/></svg>
    <svg viewBox="0 0 20 20" fill="none" stroke="#fff" stroke-width="1.500"><path d="M1 7.500h3l5-4.500v14l-5-4.500H1zM12 7.500c1.200 1.500 1.200 3.500 0 5"/><path d="M14.500 5.500c2.500 3 2.500 6 0 9M17 3c3.500 4 3.500 10 0 14" stroke="#777"/></svg>
    <svg viewBox="0 0 20 20"><path d="M6 5.500h10a1.500 1.500 0 0 1 1.500 1.500v8a1.500 1.500 0 0 1-1.500 1.500H3A1.500 1.500 0 0 1 1.500 15v-3" fill="none" stroke="#fff" stroke-width="1.600"/><path d="M18 8.500h2v5h-2zM8 8h7v6.500H4V12z" fill="#fff"/><path d="M5 0L1 7h3l-1 5 5-7H5z" fill="#fff"/></svg>
    <div class="clock"><span>9:46 PM</span><span>22-Jul-25</span></div>
  </div>
</div>
</body>
</html>
```
FILE: styles.css
```css
* { box-sizing: border-box; }
body { margin: 0; width: 1920px; height: 1080px; overflow: hidden; background: #131313; font-family: Inter, "Open Sans", sans-serif; display: flex; flex-direction: column; }
p, h2, h3 { margin: 0; font-weight: 400; }
svg { display: block; flex: none; }
.defs { position: absolute; width: 0; height: 0; }
.svgt { font-family: "Open Sans", sans-serif; font-weight: 700; }

/* tab strip */
.tabstrip { height: 50px; background: #1f2121; display: flex; align-items: center; padding-left: 8px; flex: none; }
.tabsearch { width: 34px; height: 34px; border-radius: 11px; background: #3a3b3b; display: grid; place-items: center; margin-right: 4px; }
.tabsearch svg { width: 20px; height: 20px; }
.tabs { display: flex; width: 1524px; }
.tab { width: 30.030px; height: 20px; display: flex; align-items: center; padding-left: 4.600px; border-right: 2px solid #3e3f3f; flex: none; }
.tab svg { width: 20px; height: 20px; }
.tab.tight { width: 28.900px; padding-left: 3.900px; }
.tab.last { border-right: 0; }
.activetab { width: 40px; height: 43px; align-self: flex-end; background: #3c3c3c; border-radius: 10px 10px 0 0; display: flex; justify-content: center; padding-top: 12px; position: relative; }
.activetab::before, .activetab::after { content: ""; position: absolute; bottom: 0; width: 14px; height: 14px; }
.activetab::before { left: -14px; background: radial-gradient(circle at 0 0, transparent 13.500px, #3c3c3c 14px); }
.activetab::after { right: -14px; background: radial-gradient(circle at 100% 0, transparent 13.500px, #3c3c3c 14px); }
.activetab svg { width: 12px; height: 12px; }
.aftertab { width: 33px; padding-left: 9px; }
.plus { width: 14px; height: 14px; margin-left: 14px; }
.winctl { margin-left: auto; display: flex; gap: 43px; padding-right: 22px; }
.winctl svg { width: 14px; height: 14px; }

/* address bar */
.toolbar { height: 59px; background: #3c3c3c; border-bottom: 2px solid #474747; display: flex; align-items: center; flex: none; position: relative; border-radius: 10px 10px 0 0; }
.navbtns { display: flex; gap: 25px; padding-left: 17px; width: 150px; }
.navbtns svg { width: 20px; height: 20px; fill: none; stroke-width: 2; }
.omnibox { width: 1417px; height: 42px; border-radius: 21px; background: #282828; display: flex; align-items: center; padding: 0 18px 0 6px; }
.micdot { width: 30px; height: 30px; border-radius: 50%; background: #a8c7fa; color: #0b2f6b; display: grid; place-items: center; }
.micdot svg { width: 19px; height: 19px; }
.url { font: 17.600px "Open Sans", sans-serif; color: #e8e8e8; margin-left: 10px; flex: 1; letter-spacing: -.35px; }
.url i { font-style: normal; color: #bdbdbd; }
.star { width: 22px; height: 22px; }
.exts { display: flex; gap: 25px; margin-left: 24px; }
.exts svg { width: 20px; height: 20px; }
.tsep { width: 2px; height: 20px; background: #5c5c5c; margin-left: 22px; }
.profile { width: 25px; height: 25px; border-radius: 50%; background: #5d4037; color: #fff; font-size: 12px; display: grid; place-items: center; margin-left: 20px; }
.menu { width: 6px; height: 20px; margin-left: 30px; }

/* meeting */
.meet { height: 911px; display: flex; flex-direction: column; padding: 20px 20px 0; flex: none; }
.topbar { display: flex; gap: 20px; height: 50px; }
.yellow { width: 45px; border-radius: 9px; background: #fbbc04; display: grid; place-items: center; padding-bottom: 5px; }
.yellow svg { width: 25px; height: 25px; }
.presenter { flex: 1; border-radius: 9px; background: #3c4043; display: flex; align-items: center; padding-left: 20px; gap: 20px; color: #fff; font-size: 17.300px; font-weight: 500; }
.avatar { width: 30px; height: 30px; border-radius: 50%; background: #512da8; display: grid; place-items: center; font-size: 16px; }
.stage { display: flex; justify-content: space-between; margin-top: 20px; padding-left: 63px; height: 722px; }

/* shared screen */
.share { width: 1281px; height: 722px; border-radius: 10px; background: #fafbfb; position: relative; display: flex; flex-direction: column; font-family: "Open Sans", sans-serif; color: #222; }
.ln { fill: none; stroke: #444; stroke-width: 1.300; }
.ln.dim { stroke: #b5b5b5; }
.k { fill: none; stroke: #444; stroke-width: 1.400; }
.o { fill: none; stroke: #d9541e; stroke-width: 1.400; }
.share .c8 { width: 8px; height: 8px; }
.fx-title { height: 46px; border-bottom: 1px solid #c9cacc; border-radius: 10px 10px 0 0; background: #fcfcfc; display: grid; align-items: center; padding-left: 8px; grid-template-columns: 38px 30px 31px 29.500px 29.500px 30.500px 29.500px 21.500px 30px 28px 205.500px 559px 25px 20px 25px 35px 40px 39px auto; }
.fx-title > svg { width: 18px; height: 18px; }
.fx-name { font-size: 11.500px; white-space: nowrap; letter-spacing: -.46px; }
.fx-search { width: 346px; height: 31px; border: 1px solid #d0d0d0; border-radius: 3px; background: #fff; display: flex; align-items: center; padding-left: 5px; gap: 9px; font-size: 11px; color: #a5a5a5; letter-spacing: -.2px; }
.fx-search svg { width: 18px; height: 18px; }
.fx-menu { height: 26px; display: grid; padding-left: 11.500px; align-items: center; justify-items: start; grid-template-columns: 44px 61.500px 84px 56px 57px 69px 92px 59px 55.500px auto; font-size: 12px; font-weight: 700; color: #555; white-space: nowrap; letter-spacing: -.4px; }
.fx-menu span { line-height: 21px; height: 24px; border-bottom: 3px solid transparent; }
.fx-menu .on { color: #cf4510; border-color: #cf4510; }
.fx-menu .ai { background: linear-gradient(90deg, #4a6ae8, #8a55d8) text; color: transparent; }
.fx-ribbon { height: 73px; border-bottom: 1px solid #c9cacc; display: flex; padding: 0 0 5px 2.500px; background: #fbfcfc; }
.tool { display: flex; flex-direction: column; align-items: center; padding-top: 5px; width: 48px; white-space: nowrap; flex: none; }
.tool > svg:first-child { width: 25px; height: 25px; margin-bottom: 5px; }
.tool b { font-weight: 400; font-size: 11px; line-height: 14px; letter-spacing: -.2px; }
.tool .c8 { margin-top: 1px; }
.tool.sel { background: #e3e5e9; border-radius: 3px; }
.fx-ribbon i { border-right: 1px solid #e4e5e6; width: 5px; }
.tool:nth-child(1) { width: 38.500px; }
.tool:nth-child(2) { width: 40px; }
.tool:nth-child(3), .tool:nth-child(4) { width: 56px; }
.tool:nth-child(7) { width: 44px; }
.tool:nth-child(8) { width: 54px; }
.tool:nth-child(9) { width: 31px; }
.fx-ribbon i:nth-child(10) { width: 8px; }
.tool:nth-child(11) { width: 68px; }
.tool:nth-child(12) { width: 47px; }
.fx-ribbon i:nth-child(13) { width: 8px; }
.fx-ribbon i:nth-child(15) { width: 1px; }
.collapse { width: 12px; height: 12px; margin: 57px 5px 0 auto; }
.fx-tabs { height: 33px; background: #eff0f2; border-bottom: 1px solid #c9cacc; display: flex; align-items: flex-end; padding-left: 2.500px; gap: 2px; }
.ft { width: 134px; height: 26px; border: 1px solid #d3d4d7; border-bottom: 0; border-radius: 3px 3px 0 0; font-size: 11px; padding: 3px 0 0 5px; display: flex; align-items: center; gap: 9px; letter-spacing: -.35px; }
.ft.cur { background: #fff; color: #d9541e; padding-left: 6px; }
.ft svg { width: 9px; height: 9px; }
.fx-tabs .end { margin: 0 4px 10px auto; }
.fx-body { height: 477px; display: flex; position: relative; background: #f3f4f6; }
.rail { width: 35px; background: #f7f8fa; display: flex; flex-direction: column; align-items: center; gap: 20.500px; padding-top: 25.500px; }
.rail svg { width: 18px; height: 22px; }
.gutter { width: 21px; background: linear-gradient(90deg, #e8e9ed 13px, #f3f4f6 13px); border-right: 1px solid #a8a9ac; display: flex; align-items: center; padding: 2px 0 0 4px; }
.gutter svg { width: 6px; height: 10px; }
.page { width: 1204px; border-right: 2px solid #b8b9bc; background: #fff; font-family: "Liberation Serif", "Times New Roman", serif; font-size: 24.200px; line-height: 28px; color: #111; padding-top: 3px; white-space: nowrap; position: relative; overflow: hidden; }
.page p { height: 28.100px; padding-left: 144px; }
.page .l-d { margin-bottom: 31px; font-size: 26px; line-height: 27px; }
.page .l-v { margin-bottom: 1.500px; font-size: 26.300px; line-height: 27px; }
.page .in1 { padding-left: 180px; }
.page .in2 { padding-left: 252px; }
.page .bl { display: flex; align-items: center; padding-left: 181px; }
.bl svg { width: 16px; height: 16px; margin-right: 19px; }
.page sub { font-size: .66em; line-height: 0; vertical-align: -3px; }
.red { color: #f00; }
.array { width: 582px; height: 128px; margin: 3px 0 0 222px; }
.nums { font-size: 23.300px; }
.circ { font: 25px "Liberation Sans", Arial, sans-serif; }
.cursor { position: absolute; left: 277px; top: 84px; width: 8px; height: 20px; }
.cutline { position: absolute; left: 199px; top: 0; width: 140px; height: 2px; }
.vscroll { width: 21px; background: #f3f3f4; display: flex; flex-direction: column; align-items: flex-end; }
.vscroll svg { width: 12px; height: 12px; margin: 4px 1px 0 0; }
.split { width: 13px; height: 9px; border: 1px solid #999; }
.thumb { width: 13px; height: 25px; background: #c9c9c9; margin-top: 15px; }
.aibox { position: absolute; left: 1224px; top: -9px; width: 36px; height: 37px; background: #fff; border: 1px solid #e6e6ea; display: grid; place-items: center; }
.aibox svg { width: 23px; height: 25px; }
.fx-status { height: 30px; border-top: 1px solid #c9cacc; display: grid; align-items: center; padding-left: 13px; grid-template-columns: 27px 22px 115px 26.500px 26.500px 26px 675px 24px 29px 26px auto; }
.fx-status svg { width: 14px; height: 15px; }
.fx-status > .hl { width: 22px; height: 22px; background: #e2e4e8; display: grid; place-items: center; }
.pageno { width: 108px; height: 19px; border: 1px solid #c9c9c9; background: #fff; display: flex; align-items: center; justify-content: space-between; padding: 0 3px 0 5px; font-size: 11px; letter-spacing: -.2px; }
.pageno .c8 { width: 8px; height: 8px; }
.w10 { height: 37px; border-radius: 0 0 10px 10px; overflow: hidden; display: flex; align-items: stretch; background: linear-gradient(90deg, #35251d 0, #35251d 25%, #2e3022 32%, #33281f 50%, #2d241e 75%, #1c1d1e 85%); color: #ddd; }
.start { width: 43px; display: grid; place-items: center; padding-right: 2px; }
.start svg { width: 16px; height: 16px; }
.wsearch { width: 271px; background: #f2f2f2; color: #444; display: flex; align-items: center; padding-left: 11px; font-size: 14.300px; }
.wsearch > svg { width: 17px; height: 17px; margin-right: 10px; }
.wsearch span { width: 118px; white-space: nowrap; letter-spacing: -.4px; }
.wsearch .brain { width: 60px; height: 34px; margin: 0 0 0 52px; }
.tv { width: 48px; display: grid; place-items: center; padding-right: 4px; }
.tv svg { width: 20px; height: 18px; }
.wicons { display: flex; }
.wicons span { width: 37.530px; display: grid; place-items: center; }
.wicons svg { width: 24px; height: 23px; }
.wicons .run { background: linear-gradient(#76b9ed, #76b9ed) center bottom / 29px 2px no-repeat; }
.wicons .fxon { background: #6b625c; }
.wtray { display: flex; align-items: center; margin-left: 20px; }
.wtray svg { width: 18px; height: 18px; margin-right: 4.600px; }
.wtray .wx { width: 25px; height: 25px; margin-right: 6px; }
.temp { font-size: 14px; width: 49px; letter-spacing: -.5px; }
.wdate { font-size: 11.500px; margin: 17px 15px 0 4px; letter-spacing: -.5px; width: 49px; }

/* self view */
.pip { position: absolute; left: 1033px; top: 537px; width: 294px; height: 165px; border-radius: 12px; background: radial-gradient(ellipse 60% 110% at 50% 30%, #70422f 0, #5e2c1d 45%, #582818 80%, #4a2013 130%); box-shadow: 0 2px 10px rgba(0,0,0,.4); display: grid; place-items: center; font-family: Inter, sans-serif; }
.pipav { width: 60px; height: 60px; border-radius: 50%; background: #5d4037; color: #fff; font-size: 32px; display: grid; place-items: center; }
.pipmic { position: absolute; right: 10px; top: 10px; width: 30px; height: 30px; border-radius: 50%; background: #5c1900; display: grid; place-items: center; }
.pipmic svg { width: 20px; height: 20px; fill: #ffb59e; }
.pipname { position: absolute; left: 12px; bottom: 9px; color: #fff; font-size: 15px; font-weight: 600; line-height: 20px; letter-spacing: -.25px; }

/* chat */
.chat { width: 450px; height: 722px; border-radius: 19px; background: #fff; color: #1f1f1f; position: relative; display: flex; flex-direction: column; }
.chead { display: flex; justify-content: space-between; align-items: center; height: 82px; padding: 0 32px 0 31px; }
.chead h2 { font-size: 21.500px; letter-spacing: -.1px; white-space: nowrap; }
.chead svg { width: 18px; height: 18px; }
.notice { margin: 14px 16px 0; height: 90px; border-radius: 8px; background: #e8edf6; display: flex; flex-direction: column; justify-content: center; align-items: center; font-size: 14.600px; line-height: 20px; color: #444746; letter-spacing: -.05px; white-space: nowrap; }
.msgs { padding: 12px 0 0 36px; font-size: 15.200px; line-height: 20px; flex: 1; position: relative; white-space: nowrap; letter-spacing: .1px; }
.msg { margin-top: 27.900px; }
.first + .msg { margin-top: 28px; }
.msg h3 { font-size: 15.500px; font-weight: 600; letter-spacing: -.08px; }
.msg h3 time { font-weight: 400; font-size: 14.300px; color: #444746; margin-left: 10px; letter-spacing: -.1px; }
.msg p { margin-top: 8px; }
.cthumb { position: absolute; right: 1px; top: 340px; width: 10px; height: 92px; border-radius: 4px; background: #dadce0; }
.cinput { height: 62px; margin: 0 20px 20px; border: 1px solid #c4c7c5; border-radius: 31px; display: flex; align-items: center; justify-content: space-between; padding: 0 18px 0 20px; font-size: 17.200px; color: #5f6368; }
.cinput svg { width: 25px; height: 25px; }

/* call bar */
.callbar { height: 99px; margin: 0 -20px; display: flex; align-items: center; position: relative; color: #fff; }
.cinfo { display: flex; align-items: center; font-size: 19.500px; font-weight: 500; padding-left: 29px; width: 608px; white-space: nowrap; letter-spacing: .05px; }
.cinfo span:first-child { letter-spacing: -.3px; }
.cinfo i { width: 1px; height: 20px; background: #9aa0a6; margin: 0 15px 0 15px; }
.controls { display: flex; gap: 10px; }
.pair { width: 110px; height: 60px; border-radius: 16px; background: #601410; display: flex; justify-content: space-between; align-items: center; padding-left: 18px; color: #f9dedc; }
.pair .up { width: 22px; height: 22px; }
.pair span { width: 60px; height: 60px; border-radius: 16px; background: #f9dedc; display: grid; place-items: center; }
.pair span svg { width: 29px; height: 29px; fill: #601410; }
.rbtn { width: 70px; height: 60px; border-radius: 30px; background: #333537; display: grid; place-items: center; }
.rbtn svg { width: 29px; height: 29px; fill: #e3e3e3; }
.rbtn.slim { width: 45px; border-radius: 22px; }
.rbtn.slim svg { width: 30px; height: 24px; }
.rbtn.end { width: 90px; background: #dc362e; }
.rbtn.end svg { fill: #fff; }
.ricons { display: flex; gap: 31px; margin-left: auto; padding-right: 31px; align-items: center; fill: #fff; }
.ricons svg { width: 29px; height: 29px; fill: #fff; }
.ricons > svg:last-child { width: 28px; height: 26px; }
.people { position: relative; }
.people b { position: absolute; left: 15px; top: -26px; width: 36px; height: 25px; border-radius: 13px; background: #5f6368; font-size: 14px; font-weight: 600; display: grid; place-items: center; }

/* desktop taskbar */
.taskbar { height: 60px; border-top: 1px solid #45403f; background: linear-gradient(90deg, #2a1b1d 0, #251b22 18%, #1f1c2a 38%, #231f2a 55%, #2c2623 75%, #32201c 90%, #6b3b1e 99%); display: flex; position: relative; flex: none; padding-left: 375.500px; }
.apps { display: flex; }
.apps > span { width: 55.100px; height: 57px; display: grid; place-items: center; position: relative; }
.apps > span > svg { width: 29px; height: 30px; }
.apps .run::after { content: ""; position: absolute; left: 23.500px; bottom: 4px; width: 8px; height: 4px; border-radius: 2px; background: #9b989c; }
.apps .cur::before { content: ""; position: absolute; left: 3px; top: 4px; width: 49px; height: 49px; border-radius: 6px; background: rgba(255,255,255,.09); border: 1px solid rgba(255,255,255,.08); }
.apps .cur::after { left: 17.500px; width: 20px; background: #76cdc8; }
.apps .cur > svg { position: relative; }
.bdg { position: absolute; left: 28px; top: 8px; width: 20px; height: 20px; border-radius: 50%; background: #5d4037; color: #eee; font: 12px "Open Sans", sans-serif; display: grid; place-items: center; }
.bdg svg { width: 20px; height: 20px; }
.tray { margin-left: auto; display: grid; grid-template-columns: 40px 40px 40px 29.500px 30.500px 40px 63px; align-items: center; padding: 0 24px 2px 0; }
.tray svg { width: 20px; height: 20px; }
.clock { color: #fff; font: 14.500px/20px "Open Sans", sans-serif; display: flex; flex-direction: column; align-items: flex-end; white-space: nowrap; letter-spacing: -.1px; }
```
